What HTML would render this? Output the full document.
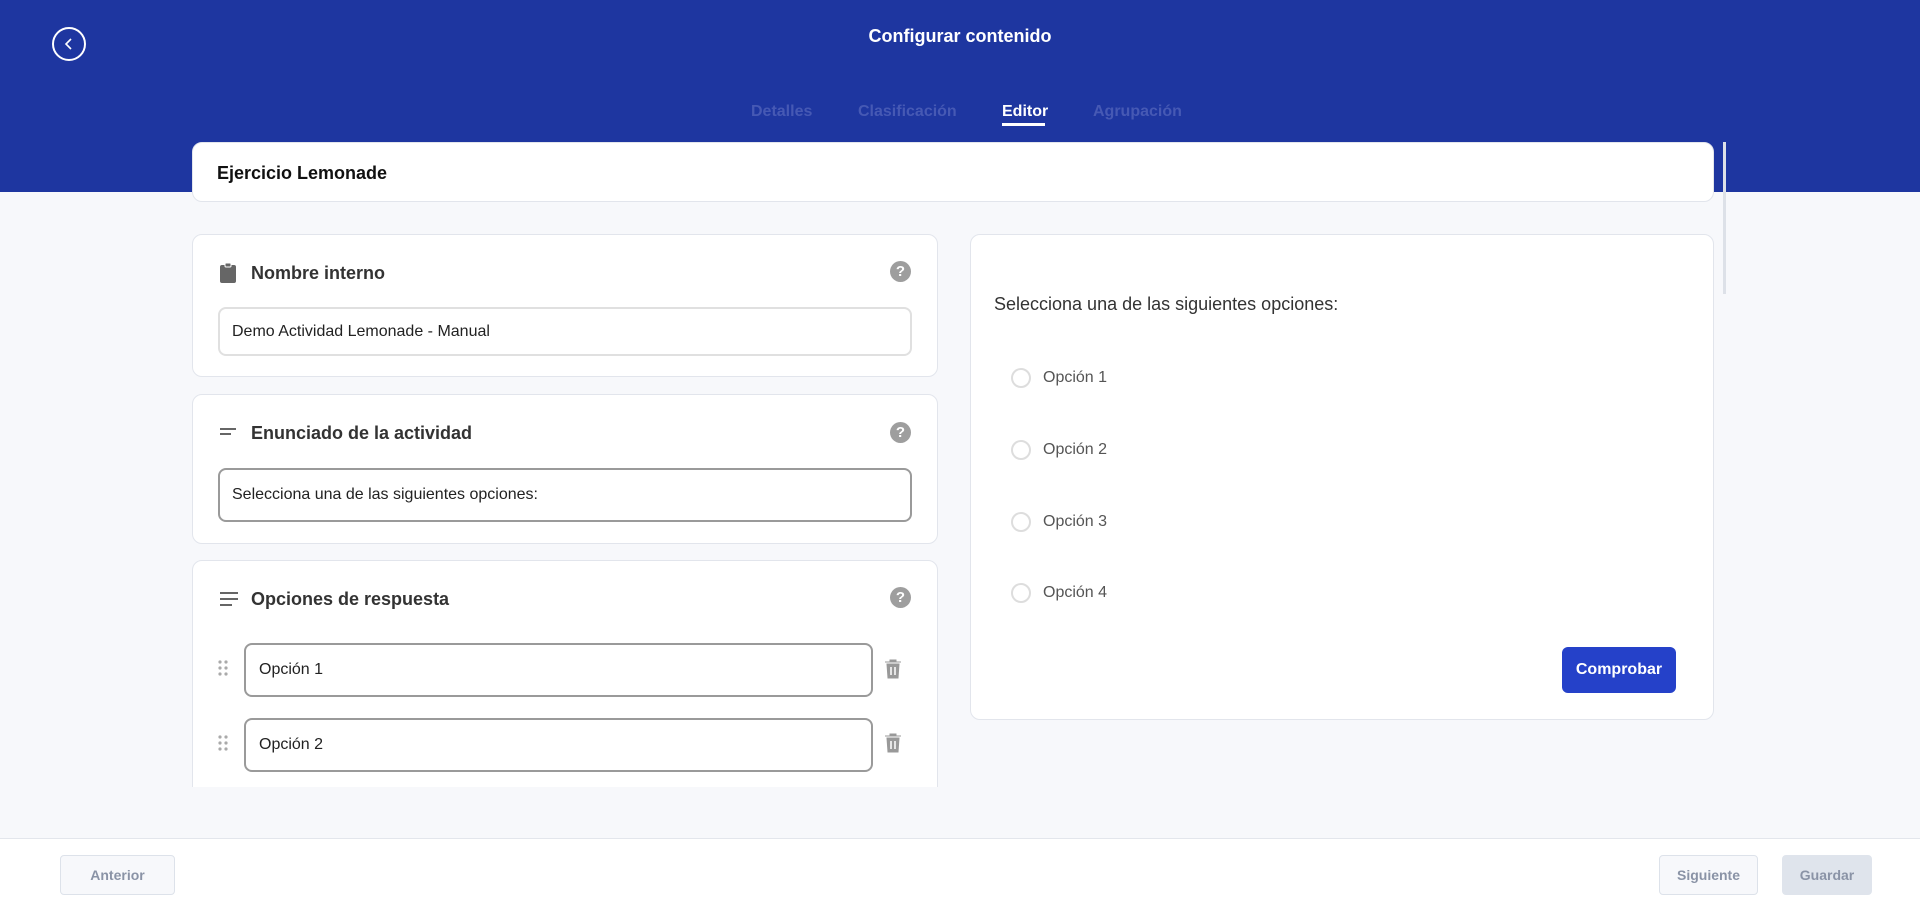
<!DOCTYPE html>
<html><head><meta charset="utf-8"><style>
*{box-sizing:border-box;margin:0;padding:0}
body{width:1920px;height:911px;overflow:hidden;background:#f7f8fb;font-family:"Liberation Sans",sans-serif;position:relative;color:#333}
.abs{position:absolute}
.hdr{left:0;top:0;width:1920px;height:192px;background:#1e36a0}
.card{background:#fff;border:1px solid #e2e5ec;border-radius:10px}
.title{font-size:18px;font-weight:bold;color:#333}
.inp{background:#fff;border:2px solid #e0e0e0;border-radius:8px;font-size:16px;color:#222;padding-left:12px;display:flex;align-items:center}
.inp.d{border-color:#9a9a9a}
.help{width:21px;height:21px;border-radius:50%;background:#9e9e9e;color:#fff;font-size:15px;font-weight:bold;text-align:center;line-height:21px}
.radio{width:20px;height:20px;border-radius:50%;border:2px solid #ddd}
.opt{font-size:16px;color:#555}
.tab{top:103px;font-size:16px;font-weight:bold;color:#4659b4}
.btn{border:1px solid #dde2ea;border-radius:4px;background:#f7f8fb;font-size:14px;font-weight:bold;color:#8a93a6;display:flex;align-items:center;justify-content:center}
</style></head><body>
<div class="abs hdr"></div>
<div class="abs" style="left:52px;top:27px;width:34px;height:34px;border:2px solid #fff;border-radius:50%"></div>
<svg class="abs" style="left:62px;top:37px" width="14" height="14" viewBox="0 0 14 14"><path d="M9 2 L4 7 L9 12" stroke="#fff" stroke-width="1.6" fill="none"/></svg>
<div class="abs" style="left:0;width:1920px;top:26px;text-align:center;color:#fff;font-size:18px;font-weight:bold">Configurar contenido</div>
<div class="abs tab" style="left:751px">Detalles</div>
<div class="abs tab" style="left:858px">Clasificación</div>
<div class="abs tab" style="left:1002px;color:#fff">Editor</div>
<div class="abs" style="left:1002px;top:123px;width:43px;height:3px;background:#fff"></div>
<div class="abs tab" style="left:1093px">Agrupación</div>

<div class="abs card" style="left:192px;top:142px;width:1522px;height:60px"></div>
<div class="abs" style="left:217px;top:163px;font-size:18px;font-weight:bold;color:#111">Ejercicio Lemonade</div>
<div class="abs" style="left:1723px;top:142px;width:3px;height:152px;background:#dde1e8"></div>

<!-- card1 -->
<div class="abs card" style="left:192px;top:234px;width:746px;height:143px"></div>
<svg class="abs" style="left:219px;top:262px" width="18" height="22" viewBox="0 0 18 22"><rect x="1" y="3" width="16" height="18" rx="2" fill="#666"/><rect x="6" y="1" width="6" height="4" rx="1" fill="#666" stroke="#fff" stroke-width="1"/></svg>
<div class="abs title" style="left:251px;top:263px">Nombre interno</div>
<div class="abs help" style="left:890px;top:261px">?</div>
<div class="abs inp" style="left:218px;top:307px;width:694px;height:49px">Demo Actividad Lemonade - Manual</div>

<!-- card2 -->
<div class="abs card" style="left:192px;top:394px;width:746px;height:150px"></div>
<svg class="abs" style="left:220px;top:426px" width="18" height="12"><rect x="0" y="2" width="16" height="2" fill="#666"/><rect x="0" y="7" width="11" height="2" fill="#666"/></svg>
<div class="abs title" style="left:251px;top:423px">Enunciado de la actividad</div>
<div class="abs help" style="left:890px;top:422px">?</div>
<div class="abs inp d" style="left:218px;top:468px;width:694px;height:54px">Selecciona una de las siguientes opciones:</div>

<!-- card3 -->
<div class="abs card" style="left:192px;top:560px;width:746px;height:260px"></div>
<svg class="abs" style="left:220px;top:590px" width="18" height="18"><rect x="0" y="2" width="18" height="2" fill="#666"/><rect x="0" y="8" width="18" height="2" fill="#666"/><rect x="0" y="14" width="12" height="2" fill="#666"/></svg>
<div class="abs title" style="left:251px;top:589px">Opciones de respuesta</div>
<div class="abs help" style="left:890px;top:587px">?</div>
<svg class="abs" style="left:217px;top:659px" width="12" height="18"><g fill="#aaa"><circle cx="3" cy="3" r="1.6"/><circle cx="9" cy="3" r="1.6"/><circle cx="3" cy="9" r="1.6"/><circle cx="9" cy="9" r="1.6"/><circle cx="3" cy="15" r="1.6"/><circle cx="9" cy="15" r="1.6"/></g></svg>
<div class="abs inp d" style="left:244px;top:643px;width:629px;height:54px;padding-left:13px">Opción 1</div>
<svg class="abs" style="left:884px;top:659px" width="18" height="20"><path d="M1 3h16M6 3V1h6v2M3 5h12l-1 14H4z" fill="#999" stroke="#999" stroke-width="1"/><path d="M7 8v8M11 8v8" stroke="#fff" stroke-width="1.5"/></svg>
<svg class="abs" style="left:217px;top:734px" width="12" height="18"><g fill="#aaa"><circle cx="3" cy="3" r="1.6"/><circle cx="9" cy="3" r="1.6"/><circle cx="3" cy="9" r="1.6"/><circle cx="9" cy="9" r="1.6"/><circle cx="3" cy="15" r="1.6"/><circle cx="9" cy="15" r="1.6"/></g></svg>
<div class="abs inp d" style="left:244px;top:718px;width:629px;height:54px;padding-left:13px">Opción 2</div>
<svg class="abs" style="left:884px;top:733px" width="18" height="20"><path d="M1 3h16M6 3V1h6v2M3 5h12l-1 14H4z" fill="#999" stroke="#999" stroke-width="1"/><path d="M7 8v8M11 8v8" stroke="#fff" stroke-width="1.5"/></svg>

<!-- right -->
<div class="abs card" style="left:970px;top:234px;width:744px;height:486px"></div>
<div class="abs" style="left:994px;top:294px;font-size:18px;color:#333">Selecciona una de las siguientes opciones:</div>
<div class="abs radio" style="left:1011px;top:368px"></div><div class="abs opt" style="left:1043px;top:369px">Opción 1</div>
<div class="abs radio" style="left:1011px;top:440px"></div><div class="abs opt" style="left:1043px;top:441px">Opción 2</div>
<div class="abs radio" style="left:1011px;top:512px"></div><div class="abs opt" style="left:1043px;top:513px">Opción 3</div>
<div class="abs radio" style="left:1011px;top:583px"></div><div class="abs opt" style="left:1043px;top:584px">Opción 4</div>
<div class="abs" style="left:1562px;top:647px;width:114px;height:46px;background:#2541c9;border-radius:6px;color:#fff;font-size:16px;font-weight:bold;display:flex;align-items:center;justify-content:center">Comprobar</div>

<!-- bottom -->
<div class="abs" style="left:0;top:787px;width:1920px;height:51px;background:#f7f8fb"></div>
<div class="abs" style="left:0;top:838px;width:1920px;height:73px;background:#fff;border-top:1px solid #e3e6ec"></div>
<div class="abs btn" style="left:60px;top:855px;width:115px;height:40px">Anterior</div>
<div class="abs btn" style="left:1659px;top:855px;width:99px;height:40px">Siguiente</div>
<div class="abs btn" style="left:1782px;top:855px;width:90px;height:40px;background:#dfe4ec;border-color:#dfe4ec">Guardar</div>
</body></html>
